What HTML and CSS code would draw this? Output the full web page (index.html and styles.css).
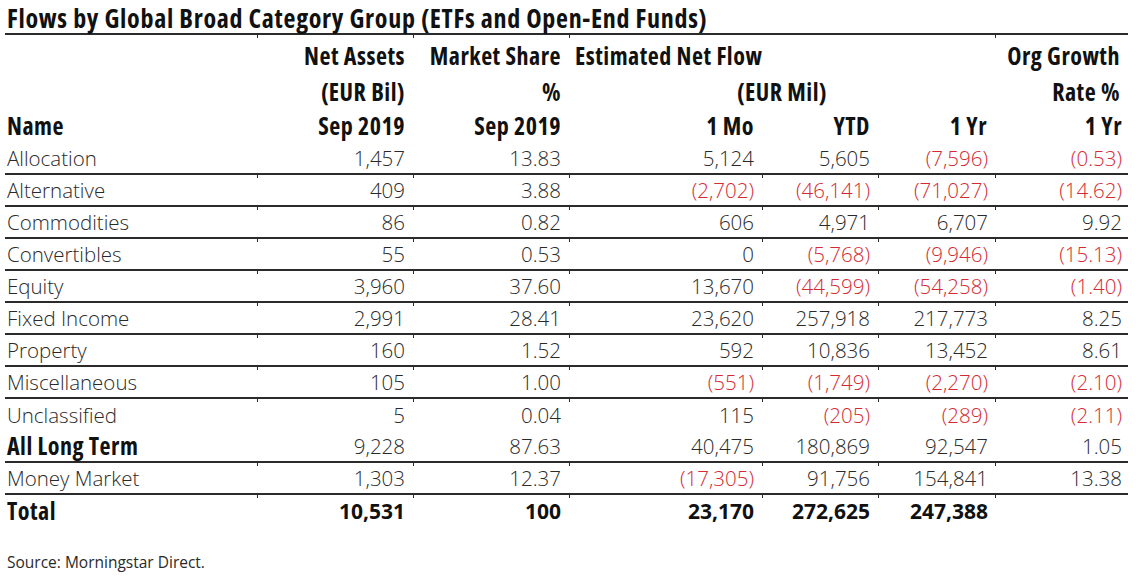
FILE: index.html
```html
<!DOCTYPE html>
<html>
<head>
<meta charset="utf-8">
<link rel="stylesheet" href="styles.css">
</head>
<body>
<div class="page">
  <h1 class="title">Flows by Global Broad Category Group (ETFs and Open-End Funds)</h1>
  <table class="flows">
    <colgroup>
      <col class="c-name"><col class="c-assets"><col class="c-share"><col class="c-mo"><col class="c-ytd"><col class="c-yr"><col class="c-org">
    </colgroup>
    <thead>
      <tr class="h h1 line">
        <th></th><th class="r">Net Assets</th><th class="r">Market Share</th><th class="l flow" colspan="3">Estimated Net Flow</th><th class="r">Org Growth</th>
      </tr>
      <tr class="h">
        <th></th><th class="r">(EUR Bil)</th><th class="r">%</th><th class="ctr" colspan="3">(EUR Mil)</th><th class="r">Rate %</th>
      </tr>
      <tr class="h h3">
        <th class="l">Name</th><th class="r">Sep 2019</th><th class="r">Sep 2019</th><th class="r">1 Mo</th><th class="r">YTD</th><th class="r">1 Yr</th><th class="r">1 Yr</th>
      </tr>
    </thead>
    <tbody>
      <tr class="d"><td>Allocation</td><td>1,457</td><td>13.83</td><td>5,124</td><td>5,605</td><td class="neg">(7,596)</td><td class="neg">(0.53)</td></tr>
      <tr class="d line"><td>Alternative</td><td>409</td><td>3.88</td><td class="neg">(2,702)</td><td class="neg">(46,141)</td><td class="neg">(71,027)</td><td class="neg">(14.62)</td></tr>
      <tr class="d line"><td>Commodities</td><td>86</td><td>0.82</td><td>606</td><td>4,971</td><td>6,707</td><td>9.92</td></tr>
      <tr class="d line"><td>Convertibles</td><td>55</td><td>0.53</td><td>0</td><td class="neg">(5,768)</td><td class="neg">(9,946)</td><td class="neg">(15.13)</td></tr>
      <tr class="d line"><td>Equity</td><td>3,960</td><td>37.60</td><td>13,670</td><td class="neg">(44,599)</td><td class="neg">(54,258)</td><td class="neg">(1.40)</td></tr>
      <tr class="d line"><td>Fixed Income</td><td>2,991</td><td>28.41</td><td>23,620</td><td>257,918</td><td>217,773</td><td>8.25</td></tr>
      <tr class="d line"><td>Property</td><td>160</td><td>1.52</td><td>592</td><td>10,836</td><td>13,452</td><td>8.61</td></tr>
      <tr class="d line"><td>Miscellaneous</td><td>105</td><td>1.00</td><td class="neg">(551)</td><td class="neg">(1,749)</td><td class="neg">(2,270)</td><td class="neg">(2.10)</td></tr>
      <tr class="d line"><td>Unclassified</td><td>5</td><td>0.04</td><td>115</td><td class="neg">(205)</td><td class="neg">(289)</td><td class="neg">(2.11)</td></tr>
      <tr class="d sub"><td>All Long Term</td><td>9,228</td><td>87.63</td><td>40,475</td><td>180,869</td><td>92,547</td><td>1.05</td></tr>
      <tr class="d line"><td>Money Market</td><td>1,303</td><td>12.37</td><td class="neg">(17,305)</td><td>91,756</td><td>154,841</td><td>13.38</td></tr>
      <tr class="d line total"><td>Total</td><td>10,531</td><td>100</td><td>23,170</td><td>272,625</td><td>247,388</td><td></td></tr>
    </tbody>
  </table>
  <p class="source">Source: Morningstar Direct.</p>
</div>
</body>
</html>
```

FILE: styles.css
```css
html, body {
  margin: 0;
  padding: 0;
  background: #ffffff;
}

body {
  font-family: "Open Sans", "DejaVu Sans Condensed", sans-serif;
  color: #1e1e1e;
}

.page {
  width: 1123px;
  padding: 0 0 0 5px;
}

.title {
  margin: 0;
  padding: 3px 0 0 2px;
  height: 33px;
  box-sizing: border-box;
  font-stretch: 75%;
  font-size: 26px;
  letter-spacing: 0.7px;
  font-weight: bold;
  line-height: 30px;
  color: #111;
  white-space: nowrap;
}

.flows {
  width: 1123px;
  border-collapse: collapse;
  table-layout: fixed;
}

.c-name { width: 252px; }
.c-assets { width: 156px; }
.c-share { width: 156px; }
.c-mo { width: 193px; }
.c-ytd { width: 116px; }
.c-yr { width: 117px; }
.c-org { width: 133px; }

.flows th,
.flows td {
  padding: 0 8px 0 2px;
  white-space: nowrap;
  overflow: visible;
}

.flows th {
  font-size: 24px;
  line-height: 30px;
  font-stretch: 75%;
  letter-spacing: 0.5px;
  font-weight: bold;
  color: #111;
}

.flows tr.h th {
  height: 35px;
  vertical-align: middle;
}

.flows tr.h1 th { height: 37px; padding-top: 2px; }
.flows tr.h3 th { height: 33px; }

.flows .r { text-align: right; }
.flows .l { text-align: left; }
.flows .ctr { text-align: center; padding-left: 0; padding-right: 0; }
.flows th.flow { padding-left: 6px; }

.flows td {
  font-size: 20.5px;
  line-height: 28px;
  font-stretch: 95%;
  font-weight: 300;
  height: 32px;
  text-align: right;
  vertical-align: middle;
  box-sizing: border-box;
  color: #2a2a2a;
}

.flows td:first-child {
  text-align: left;
  padding-left: 2px;
}

.flows td:nth-child(6) { padding-right: 7px; }
.flows td:nth-child(7),
.flows th:nth-child(7) { padding-right: 6px; }

.flows tr.line > * {
  border-top: 2px solid #2b2b2b;
}

.flows tr.line > * + * {
  background-image: linear-gradient(#2b2b2b, #2b2b2b);
  background-size: 1px 3px;
  background-position: left top;
  background-repeat: no-repeat;
}

.flows td.neg {
  color: #d42a33;
}

.flows tr.sub td:first-child,
.flows tr.total td:first-child {
  font-size: 24px;
  font-stretch: 75%;
  letter-spacing: 0.5px;
  font-weight: bold;
  color: #111;
}

.flows tr.total td {
  font-size: 21px;
  font-stretch: 95%;
  font-weight: bold;
  color: #111;
}

.source {
  margin: 25px 0 0 2px;
  font-size: 15.5px;
  font-stretch: 95%;
  font-weight: 400;
  color: #2a2a2a;
}
```
